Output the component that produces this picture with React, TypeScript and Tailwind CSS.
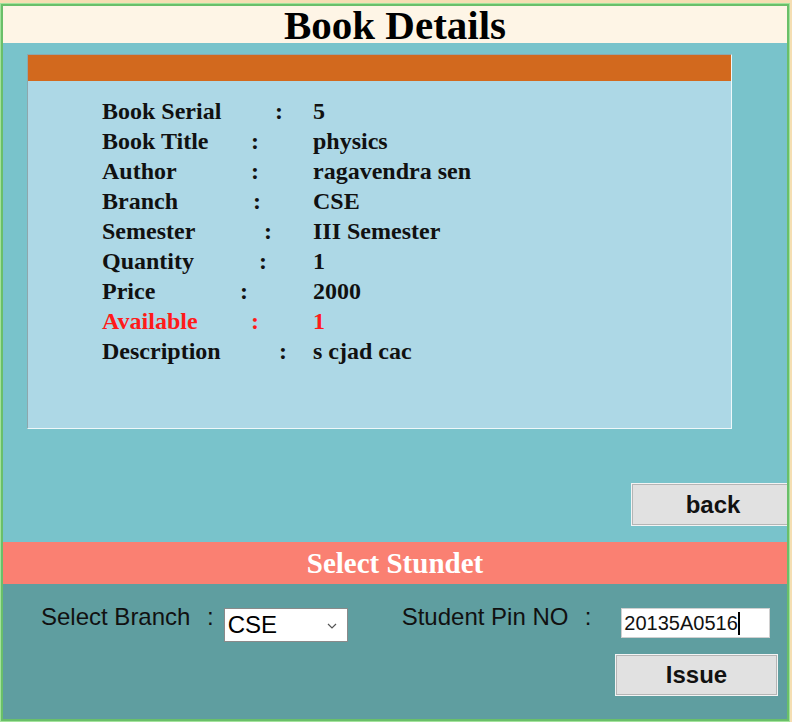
import React from "react";

const rows: { label: string; w: string; value: string; red?: boolean }[] = [
  { label: "Book Serial", w: "w-[173px]", value: "5" },
  { label: "Book Title", w: "w-[149px]", value: "physics" },
  { label: "Author", w: "w-[149px]", value: "ragavendra sen" },
  { label: "Branch", w: "w-[151px]", value: "CSE" },
  { label: "Semester", w: "w-[162px]", value: "III Semester" },
  { label: "Quantity", w: "w-[157px]", value: "1" },
  { label: "Price", w: "w-[138px]", value: "2000" },
  { label: "Available", w: "w-[149px]", value: "1", red: true },
  { label: "Description", w: "w-[177px]", value: "s cjad cac" },
];

export default function App() {
  return (
    <div className="h-[722px] w-[792px] bg-[#f5deb3] pt-[3px] overflow-hidden">
      <div className="w-[790px] h-[719px] border border-[#a3e39c]">
        <div className="w-full h-full border-2 border-[#6abf69] flex flex-col overflow-hidden">
          {/* Header */}
          <div className="shrink-0 pt-[1px] bg-[#fef5e6] flex justify-center">
            <h1 className="text-black font-bold text-[41px] leading-[36px] [font-family:'Liberation_Serif',serif]">
              Book Details
            </h1>
          </div>

          {/* Teal section */}
          <div className="h-[499px] shrink-0 bg-[#79c3cb] flex flex-col pt-[11px]">
            <div className="ml-[24px] w-[705px] h-[375px] border-t border-l border-[#8da7ac] border-r-[#eef8fa] border-b-[#eef8fa] border-r border-b bg-[#add8e6] flex flex-col">
              <div className="h-[26px] bg-[#d2691e] shrink-0" />
              <div className="pt-[15px] pl-[74px] flex flex-col [font-family:'Liberation_Serif',serif] font-bold text-[24px] leading-[30px]">
                {rows.map((r) => (
                  <div
                    key={r.label}
                    className={
                      "flex h-[30px] " + (r.red ? "text-[#ff1a1a]" : "text-[#111]")
                    }
                  >
                    <div className="w-[211px] flex shrink-0">
                      <span className={r.w + " shrink-0"}>{r.label}</span>
                      <span>:</span>
                    </div>
                    <span>{r.value}</span>
                  </div>
                ))}
              </div>
            </div>
            <div className="mt-[54px] ml-[628px] w-[164px] h-[43px] shrink-0 bg-[#e1e1e1] border border-[#f4f4f4] shadow-[inset_0_0_0_1px_#b5b5b5] flex items-center justify-center text-[24px] font-bold text-[#111] [font-family:'Liberation_Sans',Arial,sans-serif]">
              back
            </div>
          </div>

          {/* Salmon bar */}
          <div className="h-[42px] shrink-0 bg-[#fa8072] text-center text-white font-bold text-[29px] leading-[42px] [font-family:'Liberation_Serif',serif]">
            Select Stundet
          </div>

          {/* Bottom */}
          <div className="flex-1 bg-[#5f9ea0] flex flex-col pt-[19px] [font-family:'Liberation_Sans',Arial,sans-serif] text-[#111]">
            <div className="flex items-start pl-[38px]">
              <span className="w-[166px] shrink-0 text-[24px] leading-[28px]">Select Branch</span>
              <span className="text-[24px] leading-[28px]">:</span>
              <div className="ml-[10px] mt-[5px] w-[124px] h-[34px] bg-white border border-[#8a8a8a] flex items-center justify-between pl-[3px] pr-[10px]">
                <span className="text-[24px] leading-[30px] text-black">CSE</span>
                <svg width="10" height="6" viewBox="0 0 10 6" className="mt-[2px]">
                  <path d="M1 1 L5 5 L9 1" fill="none" stroke="#555" strokeWidth="1.2" />
                </svg>
              </div>
              <span className="ml-[54px] w-[183px] shrink-0 text-[24px] leading-[28px]">Student Pin NO</span>
              <span className="text-[24px] leading-[28px]">:</span>
              <div className="ml-[30px] mt-[5px] w-[149px] h-[30px] bg-white border border-[#d0d0d0] flex items-center pl-[2px]">
                <span className="text-[20px] leading-[24px] text-[#111]">20135A0516</span>
                <span className="w-[2px] h-[23px] bg-black" />
              </div>
            </div>
            <div className="mt-[12px] ml-[612px] w-[163px] h-[42px] bg-[#e1e1e1] border border-[#f4f4f4] shadow-[inset_0_0_0_1px_#b5b5b5] flex items-center justify-center text-[24px] font-bold text-[#111]">
              Issue
            </div>
          </div>
        </div>
      </div>
    </div>
  );
}
